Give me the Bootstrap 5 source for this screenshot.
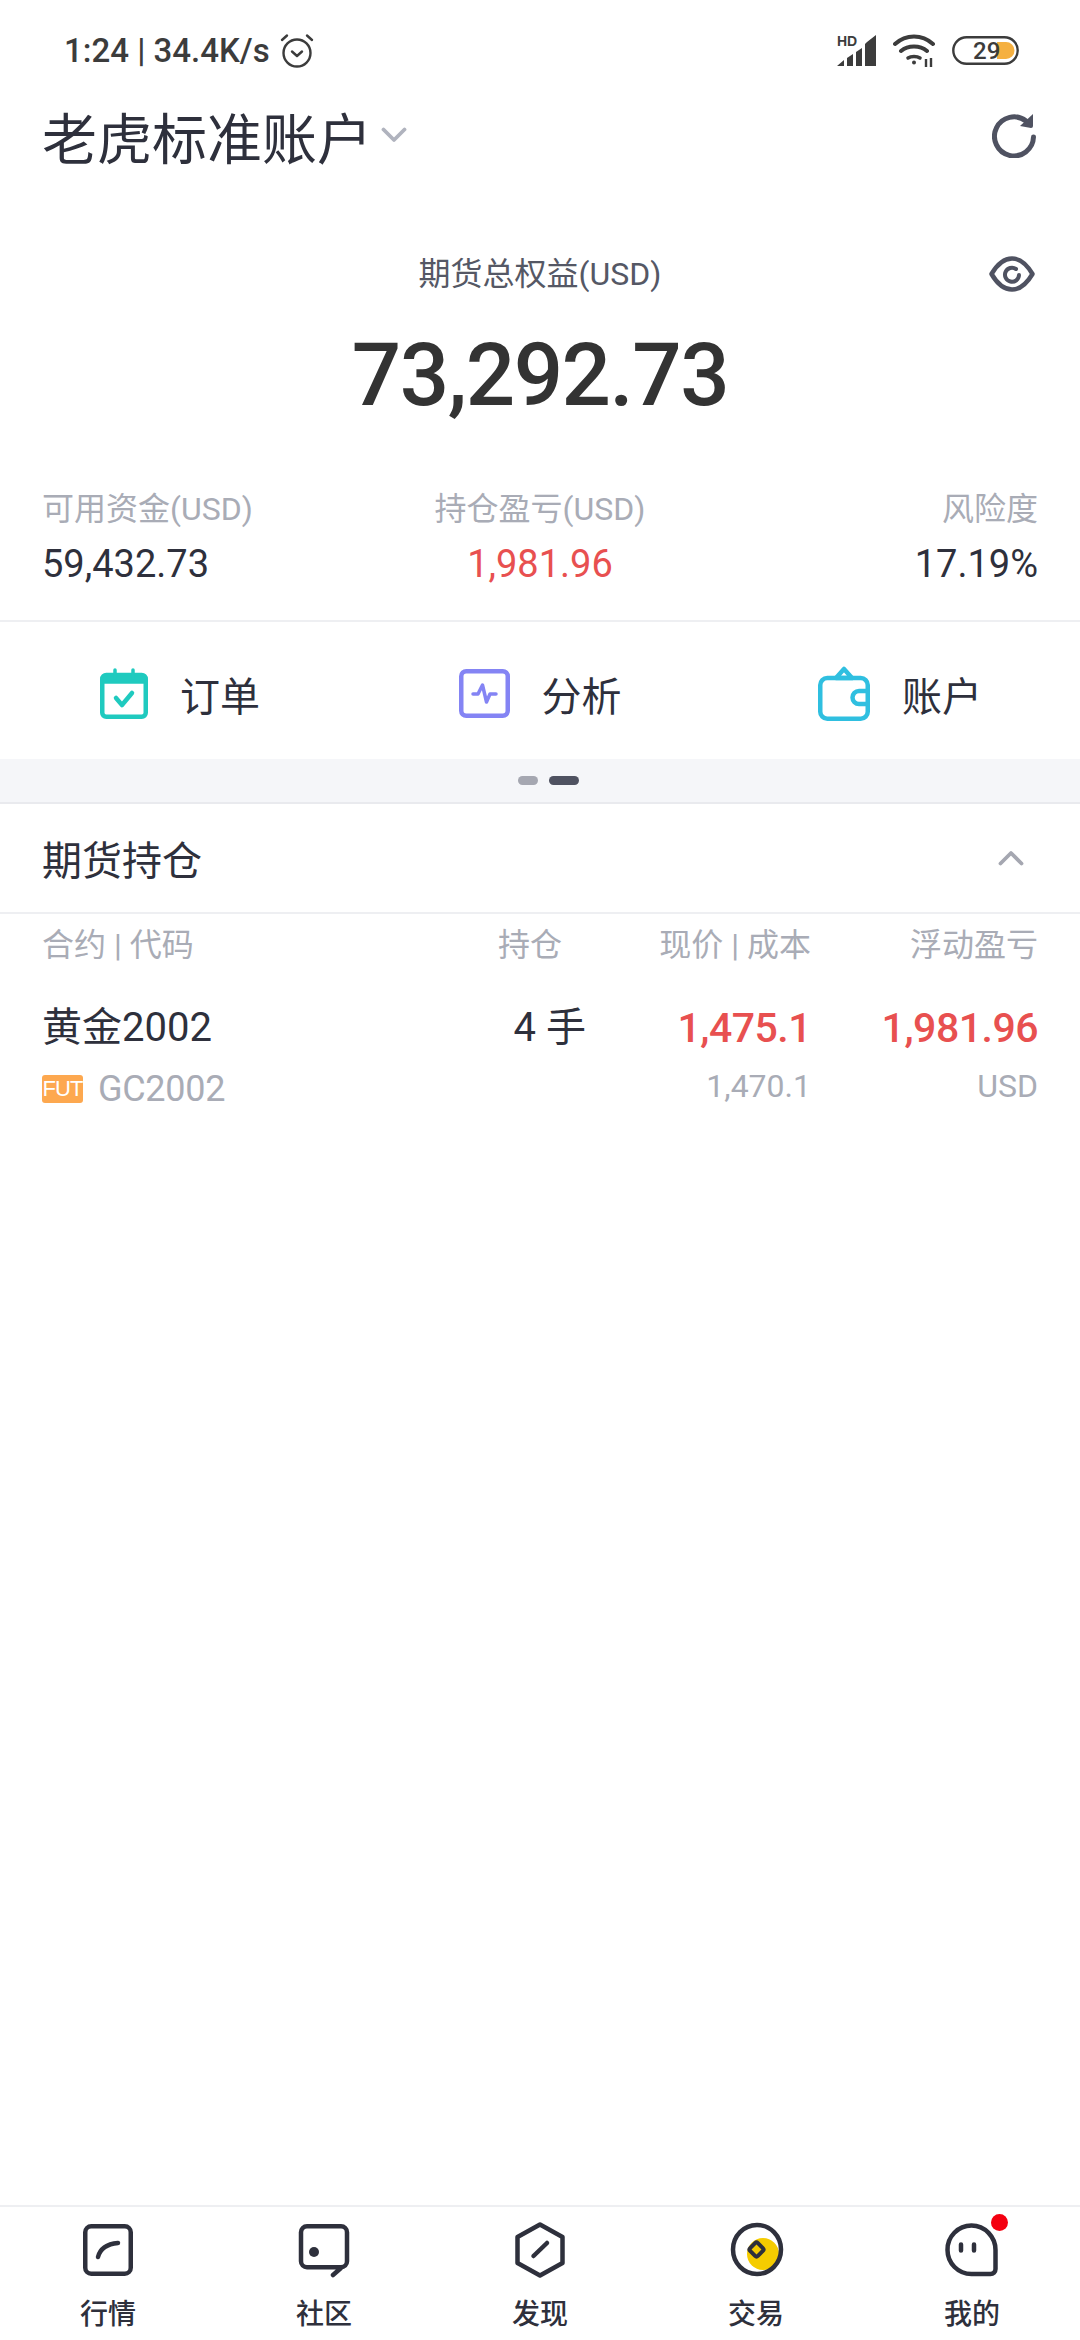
<!doctype html>
<html lang="zh"><head><meta charset="utf-8">
<link href="https://cdn.jsdelivr.net/npm/bootstrap@5.3.0/dist/css/bootstrap.min.css" rel="stylesheet">
<style>
html,body{background:#fff;height:2340px}
body{font-family:"Roboto","Noto Sans CJK SC",sans-serif;color:#2e303c;width:1080px}
.shell{height:2340px;width:1080px}
.stat{height:76px;padding:24px 61px 0 64px;color:#3c3c3c;font:500 33px/1 "Roboto","Noto Sans CJK SC",sans-serif}
.stat-r{gap:16px}
.stat-l{gap:10px}
.sig{margin-top:-4px}
.head{height:122px;padding:0 44px 4px 42px}
.ttl{font:400 55px/1 "Noto Sans CJK SC",sans-serif;color:#2e303c}
.ttl-w{gap:9px}
.equity{height:295px;padding-top:60px}
.eq-l{font:400 32px/1 "Roboto","Noto Sans CJK SC",sans-serif;color:#555865}
.eq-n{font:500 87px/1 "Roboto",sans-serif;color:#333;letter-spacing:-1.5px;margin-top:42px}
.eye{position:absolute;right:45px;top:58px}
.lab{font:400 32px/1 "Roboto","Noto Sans CJK SC",sans-serif;color:#a9acb6}
.val{font:400 38px/1 "Roboto",sans-serif;color:#2e303c;margin-top:20px}
.red{color:#e85050!important}
.stats{display:grid;grid-template-columns:1fr auto 1fr;padding:0 42px;height:129px;border-bottom:2px solid #eeeff2}
.acts{height:137px;padding-top:6px}
.acts span{font:400 40px/1 "Noto Sans CJK SC",sans-serif;color:#2e303c}
.act-i{gap:32px}
.pager{height:45px;background:#f5f6f9;border-bottom:2px solid #e9eaee;gap:11px;padding-left:16px}
.pg1{width:20px;height:9px;border-radius:5px;background:#a5a7b1}
.pg2{width:30px;height:9px;border-radius:5px;background:#4f5261}
.sec{height:110px;padding:0 56px 0 42px;border-bottom:2px solid #eeeff2}
.sec span{font:400 40px/1 "Noto Sans CJK SC",sans-serif}
.thr,.tr1,.tr2{display:grid;grid-template-columns:1fr 150px 225px 227px;padding:0 42px;text-align:right}
.thr{font:400 32px/1 "Roboto","Noto Sans CJK SC",sans-serif;color:#a9acb6;padding-top:15px}
.thc{padding-right:24px}
.tr1{margin-top:47px;font:400 40px/1 "Roboto","Noto Sans CJK SC",sans-serif}
.tr1 div:first-child{text-align:left}
.num{font-size:41px;font-weight:500;letter-spacing:-.5px}
.tr2{margin-top:19px;color:#a9acb6;font:400 32px/36px "Roboto",sans-serif}
.sym{font-size:36px;gap:15px;margin-top:3px;letter-spacing:-.3px}
.fut{width:41px;height:28px;border-radius:3px;background:#fda84f;color:#fff;font:400 22px/28px "Liberation Sans",sans-serif;text-align:center;letter-spacing:-1px}
.tab{height:135px;border-top:2px solid #eeeff2;margin-top:auto}
.tab-i{width:20%;position:relative;padding-top:15px;font:500 28px/1 "Noto Sans CJK SC",sans-serif;color:#2e303c}
.tab-i svg{display:block;margin-bottom:20px}
.dot{position:absolute;width:17px;height:17px;border-radius:50%;background:#f40010;left:127px;top:7px}
</style></head>
<body><div class="shell d-flex flex-column">
<div class="stat d-flex justify-content-between align-items-center">
  <div class="d-flex align-items-center stat-l"><span>1:24 | 34.4K/s</span>
    <svg width="34" height="35" viewBox="0 0 34 35" fill="none" stroke="#3c3c3c" stroke-width="2.400" stroke-linecap="round" stroke-linejoin="round"><circle cx="17" cy="20" r="13.500"/><path d="M12 18.500l5 4.500 5-4.500M2 7l5-4.500M32 7l-5-4.500"/></svg></div>
  <div class="d-flex align-items-center stat-r">
    <svg class="sig" width="41" height="35" viewBox="0 -4 41 35" fill="#3c3c3c"><text x="1" y="11" font-family="Liberation Sans" font-weight="700" font-size="14">HD</text><path d="M1 31l7-6v6zM11 23l6-4v12h-6zM20 31V17l6-4v18zM29 31V9l2-2 9-7v31h-3z"/></svg>
    <svg width="43" height="33" viewBox="0 0 43 33" fill="none" stroke="#3c3c3c" stroke-width="4" stroke-linecap="round"><path d="M2 10C13 0 29 0 40 10M8 17c7-6 19-6 26 0"/><path d="M15 24c3-2 9-2 12 0" stroke-width="3.500"/><circle cx="21" cy="28.500" r="2" fill="#3c3c3c" stroke="none"/><path d="M33 25v8M38 24v9" stroke-width="2.400" stroke-linecap="butt"/></svg>
    <svg width="67" height="29" viewBox="0 0 67 29" fill="none"><rect x="1.300" y="1.300" width="64.400" height="26.400" rx="13.200" stroke="#3c3c3c" stroke-width="2.400"/><path d="M45 6h9a8.500 8.500 0 0 1 0 17h-9z" fill="#f5b040"/><text x="21" y="23" font-family="Roboto" font-size="24" fill="#3c3c3c">29</text></svg>
  </div>
</div>
<div class="head d-flex justify-content-between align-items-center">
  <div class="d-flex align-items-center ttl-w"><span class="ttl">老虎标准账户</span>
    <svg width="26" height="16" viewBox="0 0 26 16" fill="none" stroke="#b0b3be" stroke-width="3.800" stroke-linecap="round" stroke-linejoin="round"><path d="M2.500 2.500L13 13 23.500 2.500"/></svg></div>
  <svg width="44" height="45" viewBox="0 0 44 45" fill="none" stroke="#4f5261" stroke-width="5" stroke-linecap="round"><path d="M41.500 24A19.500 19.500 0 1 1 34 8"/><path d="M41 1v12a2 2 0 0 1-2 2L28 13z" fill="#4f5261" stroke="none"/></svg>
</div>
<div class="equity position-relative text-center">
  <div class="eq-l">期货总权益(USD)</div>
  <div class="eq-n">73,292.73</div>
  <svg class="eye" width="46" height="36" viewBox="0 0 46 36" fill="none" stroke="#4f5261" stroke-width="4.500" stroke-linecap="round" stroke-linejoin="round"><path d="M2.500 18C9 7 16 2.500 23 2.500S37 7 43.500 18C37 29 30 33.500 23 33.500S9 29 2.500 18z"/><path d="M27 13a7 7 0 1 0 3 6" stroke-width="4"/></svg>
</div>
<div class="stats">
  <div><div class="lab">可用资金(USD)</div><div class="val">59,432.73</div></div>
  <div class="text-center"><div class="lab">持仓盈亏(USD)</div><div class="val red">1,981.96</div></div>
  <div class="text-end"><div class="lab">风险度</div><div class="val">17.19%</div></div>
</div>
<div class="acts d-flex align-items-center">
  <div class="col-4 d-flex align-items-center act-i justify-content-center"><svg width="48" height="51" viewBox="0 0 48 51" fill="none" stroke="#1fcabf" stroke-width="4.500" stroke-linecap="round" stroke-linejoin="round"><rect x="2.250" y="7" width="43.500" height="41.750" rx="4"/><path d="M3 8h42v7H3z" fill="#1fcabf" stroke-width="1.500"/><path d="M15 2v8M33 2v8" stroke-width="3.500"/><path d="M16 30l6 7 10-12" stroke-width="4.500"/></svg><span>订单</span></div>
  <div class="col-4 d-flex align-items-center act-i justify-content-center"><svg width="51" height="49" viewBox="0 0 51 49" fill="none" stroke="#8484f4" stroke-width="4.500" stroke-linecap="round" stroke-linejoin="round"><rect x="2.250" y="2.250" width="46.500" height="44.500" rx="5"/><path d="M14 25h5l4.500-9 4 17 3.500-8h6" stroke-width="3.500"/></svg><span>分析</span></div>
  <div class="col-4 d-flex align-items-center act-i justify-content-center"><svg width="52" height="55" viewBox="0 0 52 55" fill="none" stroke="#2fbfe0" stroke-width="4.500" stroke-linejoin="round"><rect x="2.250" y="12" width="47.500" height="40.750" rx="7"/><path d="M18 12l8-9 8 9z"/><path d="M50 25h-9a6.500 6.500 0 0 0 0 13h9"/></svg><span>账户</span></div>
</div>
<div class="pager d-flex justify-content-center align-items-center"><i class="pg1"></i><i class="pg2"></i></div>
<div class="sec d-flex justify-content-between align-items-center"><span>期货持仓</span>
  <svg width="26" height="16" viewBox="0 0 26 16" fill="none" stroke="#a5a7b1" stroke-width="3.800" stroke-linecap="round" stroke-linejoin="round"><path d="M2.500 13.500L13 3l10.500 10.500"/></svg></div>
<div class="thr"><div class="text-start">合约 | 代码</div><div class="thc">持仓</div><div>现价 | 成本</div><div>浮动盈亏</div></div>
<div class="tr1"><div>黄金2002</div><div>4 手</div><div class="red num">1,475.1</div><div class="red num">1,981.96</div></div>
<div class="tr2"><div class="d-flex align-items-center sym"><span class="fut">FUT</span><span>GC2002</span></div><div></div><div>1,470.1</div><div>USD</div></div>
<div class="tab d-flex">
  <div class="tab-i d-flex flex-column align-items-center"><svg width="56" height="56" viewBox="0 0 56 56" fill="none" stroke="#2e303c" stroke-width="4.500" stroke-linecap="round"><rect x="5.250" y="4.250" width="45.500" height="47.500" rx="6"/><path d="M18 35c2-8 9-13 20-14"/></svg>行情</div>
  <div class="tab-i d-flex flex-column align-items-center"><svg width="56" height="56" viewBox="0 0 56 56" fill="none" stroke="#2e303c" stroke-width="4.500" stroke-linecap="round"><path d="M11 4.250h34a6 6 0 0 1 6 6v29a6 6 0 0 1-6 6H11a6 6 0 0 1-6-6v-29a6 6 0 0 1 6-6zM45 46l-8 7"/><circle cx="18" cy="30" r="5" fill="#2e303c" stroke="none"/></svg>社区</div>
  <div class="tab-i d-flex flex-column align-items-center"><svg width="56" height="56" viewBox="0 0 56 56" fill="none" stroke="#2e303c" stroke-width="4.500" stroke-linecap="round" stroke-linejoin="round"><path d="M28 2.500L50.500 15v26L28 53.500 5.500 41V15z"/><path d="M21.500 34L35 21"/></svg>发现</div>
  <div class="tab-i d-flex flex-column align-items-center"><svg width="56" height="56" viewBox="0 0 56 56" fill="none" stroke="#2e303c" stroke-width="4.500"><circle cx="35" cy="32" r="16" fill="#f5cc00" stroke="none"/><ellipse cx="29" cy="27.500" rx="24" ry="24.500"/><rect x="23" y="22" width="11" height="11" transform="rotate(45 28.500 27.500)" rx="2" fill="#f5cc00" stroke-width="4"/></svg>交易</div>
  <div class="tab-i d-flex flex-column align-items-center"><svg width="56" height="56" viewBox="0 0 56 56" fill="none" stroke="#2e303c" stroke-width="4.500" stroke-linecap="round"><path d="M27.500 3.500C41 3.500 51.500 15 51.500 28v19a5 5 0 0 1-5 5h-19a24 24 0 0 1-24-24 24 24 0 0 1 24-24.500z"/><path d="M17 22.500v6M30 22.500v6" stroke-width="4.500"/></svg><i class="dot"></i>我的</div>
</div>
</div></body></html>
